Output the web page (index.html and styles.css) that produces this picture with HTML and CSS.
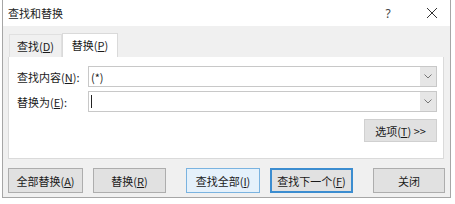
FILE: index.html
```html
<!DOCTYPE html>
<html>
<head>
  <meta charset="utf-8">
  <link rel="stylesheet" href="styles.css">
</head>
<body>
  <div class="dialog">
    <div class="titlebar">
      <span class="title">查找和替换</span>
      <span class="help">?</span>
      <span class="close">
        <svg width="12" height="12" viewBox="0 0 12 12"><path d="M1 1 L11 11 M11 1 L1 11" stroke="#333" stroke-width="1" fill="none"/></svg>
      </span>
    </div>

    <div class="tabs">
      <div class="tab">查找(<u>D</u>)</div>
      <div class="tab active">替换(<u>P</u>)</div>
    </div>

    <div class="panel">
      <div class="row">
        <label>查找内容(<u>N</u>):</label>
        <div class="combo">
          <span class="value">(*)</span>
          <span class="drop"><svg width="8" height="5" viewBox="0 0 8 5"><path d="M0.5 0.5 L4 4 L7.5 0.5" stroke="#777" stroke-width="1" fill="none"/></svg></span>
        </div>
      </div>
      <div class="row">
        <label>替换为(<u>E</u>):</label>
        <div class="combo">
          <span class="caret"></span>
          <span class="drop"><svg width="8" height="5" viewBox="0 0 8 5"><path d="M0.5 0.5 L4 4 L7.5 0.5" stroke="#777" stroke-width="1" fill="none"/></svg></span>
        </div>
      </div>
      <div class="options-row">
        <button class="btn options">选项(<u>T</u>) &gt;&gt;</button>
      </div>
    </div>

    <div class="buttons">
      <button class="btn replace-all">全部替换(<u>A</u>)</button>
      <button class="btn replace">替换(<u>R</u>)</button>
      <button class="btn find-all">查找全部(<u>I</u>)</button>
      <button class="btn find-next">查找下一个(<u>F</u>)</button>
      <button class="btn close-btn">关闭</button>
    </div>
  </div>
</body>
</html>
```

FILE: styles.css
```css
body {
  margin: 0;
  background: #fff;
  font-family: "Noto Sans CJK SC", "Noto Sans", sans-serif;
  font-size: 11px;
  color: #1a1a1a;
}
.dialog {
  width: 447px;
  height: 197px;
  margin-left: 2px;
  background: #f0f0f0;
  border: 1px solid #a6a6a6;
  border-top: none;
}
.titlebar {
  height: 26px;
  background: #fff;
  display: flex;
  align-items: center;
  padding-left: 5px;
}
.title {
  flex: 1;
  font-size: 11px;
  color: #222;
}
.help {
  width: 14px;
  text-align: center;
  font-family: "Noto Sans", sans-serif;
  font-size: 12px;
  color: #444;
  margin-right: 30px;
}
.close {
  width: 14px;
  display: flex;
  justify-content: center;
  margin-right: 11px;
}
.tabs {
  display: flex;
  padding: 7px 0 0 6px;
  height: 24px;
}
.tab {
  width: 53px;
  height: 23px;
  line-height: 22px;
  text-align: center;
  border: 1px solid #e0e0e0;
  border-bottom: none;
  margin-top: 1px;
  box-sizing: border-box;
}
.tab.active {
  width: 56px;
  height: 24px;
  margin-top: 0;
  background: #fff;
  border-color: #dadada;
}
.panel {
  margin-left: 5px;
  width: 436px;
  height: 102px;
  background: #fff;
  border: 1px solid #dadada;
  border-top: none;
  box-sizing: border-box;
  padding: 9px 6px 0 8px;
}
.row {
  display: flex;
  align-items: center;
  height: 21px;
  margin-bottom: 4px;
}
.row label {
  width: 71px;
}
.combo {
  flex: 1;
  height: 21px;
  display: flex;
  align-items: center;
  border: 1px solid #c8c8c8;
  box-sizing: border-box;
  padding-left: 2px;
}
.value {
  flex: 1;
}
.caret {
  width: 1px;
  height: 13px;
  background: #222;
  margin-right: auto;
}
.drop {
  width: 16px;
  height: 19px;
  background: #e6e6e6;
  display: flex;
  align-items: center;
  justify-content: center;
}
.options-row {
  display: flex;
  justify-content: flex-end;
  margin-top: 7px;
}
.btn {
  height: 25px;
  background: #e1e1e1;
  border: 1px solid #adadad;
  font-family: inherit;
  font-size: 11px;
  color: #1a1a1a;
  padding: 0;
}
.options {
  width: 73px;
  height: 23px;
  border-color: #d0d0d0;
}
.buttons {
  display: flex;
  padding: 9px 0 0 5px;
}
.replace-all {
  width: 75px;
  margin-right: 10px;
}
.replace {
  width: 73px;
  margin-right: 20px;
}
.find-all {
  width: 74px;
  margin-right: 10px;
  background: #e5f1fb;
  border-color: #7ab3e0;
}
.find-next {
  width: 83px;
  margin-right: 20px;
  border: 2px solid #3c8dd0;
}
.close-btn {
  width: 72px;
}
```
